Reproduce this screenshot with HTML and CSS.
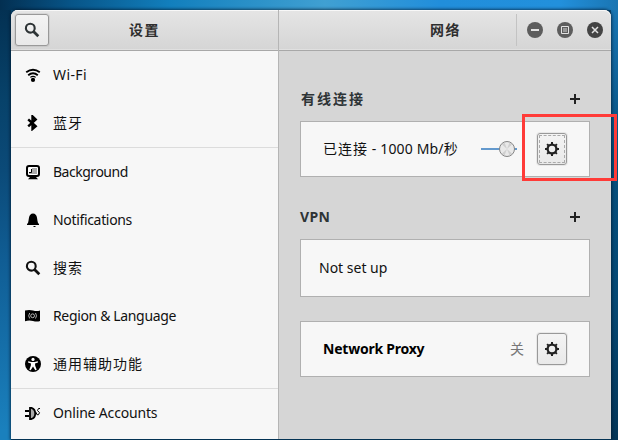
FILE: index.html
```html
<!DOCTYPE html>
<html lang="zh-CN">
<head>
<meta charset="utf-8">
<title>设置</title>
<link rel="stylesheet" href="styles.css">
</head>
<body>
<svg class="defs" width="0" height="0">
  <symbol id="search" viewBox="0 0 16 16"><circle cx="6.3" cy="6.2" r="4.4" fill="none" stroke="currentColor" stroke-width="2.1"/><path d="M9.5 9.5l4.8 4.7" stroke="currentColor" stroke-width="2.8"/></symbol>
  <symbol id="gear" viewBox="0 0 16 16"><circle cx="8" cy="8" r="4.4" fill="none" stroke="currentColor" stroke-width="2.3"/><path d="M8 1v3M8 12v3M1 8h3M12 8h3M3.100 3.100l2 2M10.900 10.900l2 2M3.100 12.900l2-2M10.900 5.100l2-2" stroke="currentColor" stroke-width="2"/></symbol>
  <symbol id="plus" viewBox="0 0 10 10"><path d="M5 0v10M0 5h10" stroke="currentColor" stroke-width="2"/></symbol>
</svg>
<div class="window">
  <aside class="sidebar">
    <header class="bar">
      <button class="btn search-btn"><svg class="icon"><use href="#search"/></svg></button>
      <h1 class="title title-left">设置</h1>
    </header>
    <nav class="list">
      <a class="row"><svg class="icon" viewBox="0 0 16 16"><g fill="none" stroke="#000" stroke-width="1.900"><path d="M1.200 5.300Q8 .2 14.800 5.300"/><path d="M3.200 8.200Q8 4.300 12.800 8.200"/><path d="M5.300 10.400Q8 8.200 10.700 10.400" stroke-width="1.200"/></g><circle cx="8" cy="12.900" r="2.100"/></svg><span class="wifi">Wi-Fi</span></a>
      <a class="row line"><svg class="icon" viewBox="0 0 16 16"><path d="M3.200 4.300l7.500 7L7.500 14V1.400l3.200 3-7.500 7" fill="none" stroke="#000" stroke-width="2.400"/></svg><span class="cjk">蓝牙</span></a>
      <a class="row"><svg class="icon" viewBox="0 0 16 16"><rect x="2" y="1.900" width="12" height="10" rx="2" fill="#fff" stroke="#000" stroke-width="2"/><path d="M7 4h5v6H4V8h3z" fill="#aaa"/><path d="M4 8.500h2.500V5" fill="none" stroke="#000"/><path d="M5 13h6l2 2.200H3z"/></svg><span class="background">Background</span></a>
      <a class="row"><svg class="icon" viewBox="0 0 16 16"><path d="M2 13v-1l1-1C4 8 3.500 5 5 3Q8 .2 11 3c1.500 2 1 5 2 8l1 1v1zM8 14h3l-1 1H9z"/></svg><span class="notifications">Notifications</span></a>
      <a class="row"><svg class="icon"><use href="#search"/></svg><span class="cjk">搜索</span></a>
      <a class="row"><svg class="icon" viewBox="0 0 16 16"><path d="M0 2.600Q4 1.400 8 2.500t7 0V13q-3 1.200-7 0t-8 .3z"/><g fill="none" stroke="#ddd" stroke-width=".8"><circle cx="7.600" cy="7.800" r="1.900"/><path d="M4.700 5Q2.700 7.800 4.700 10.500M10.500 5q2 2.800 0 5.500"/></g></svg><span class="region">Region &amp; Language</span></a>
      <a class="row line"><svg class="icon" viewBox="0 0 16 16"><circle cx="8" cy="8" r="8"/><circle cx="8" cy="3.400" r="1.600" fill="#fff"/><path d="M3.200 5.200l3.300.7h3l3.300-.7.2 1.200-3 1 .2 2.300 1.500 4-1.400.5L8 10.500l-2.300 3.700-1.400-.5 1.500-4L6 7.400l-3-1z" fill="#fff"/></svg><span class="cjk">通用辅助功能</span></a>
      <a class="row"><svg class="icon" viewBox="0 0 16 16"><path d="M5 2.800h1.500Q10.200 4 10.200 8.500T6.500 14H5z" fill="#aaa" stroke="#000" stroke-width="1.800"/><path d="M0 6h4M0 11h4M10 8.500h2" stroke="#000" stroke-width="2"/><path d="M15 3.500h-1.500l-1 2 2 2.200-1 2H12" fill="none" stroke="#000"/></svg><span class="accounts">Online Accounts</span></a>
    </nav>
  </aside>
  <main class="panel">
    <header class="bar">
      <h1 class="title title-right">网络</h1>
      <div class="controls">
        <svg viewBox="0 0 16 16"><circle cx="8" cy="8" r="8" fill="#5d5d5d"/><path d="M4 8h8" stroke="#e3e3e3" stroke-width="2"/></svg>
        <svg viewBox="0 0 16 16"><circle cx="8" cy="8" r="8" fill="#5d5d5d"/><path d="M4.500 4.500h7v7h-7z" fill="#5d5d5d" stroke="#e3e3e3"/><path d="M6 6h4v4H6z" fill="#999"/></svg>
        <svg viewBox="0 0 16 16"><circle cx="8" cy="8" r="8" fill="#444"/><path d="M5 5l6 6M11 5l-6 6" stroke="#e3e3e3" stroke-width="1.500"/></svg>
      </div>
    </header>
    <div class="content">
      <div class="section"><h2 class="cjk-head">有线连接</h2><svg class="plus"><use href="#plus"/></svg></div>
      <div class="card">
        <span class="wired"><span class="cjk">已连接</span> - 1000 Mb/秒</span>
        <span class="slider"><svg width="36" height="18" viewBox="0 0 36 18"><path d="M0 9h36" stroke="#6399cd" stroke-width="2"/><circle cx="26" cy="9" r="7.500" fill="#e9e9e9" stroke="#858585"/><path d="M26 9l-5-4.500 2.500-2zM26 9l5-4.500-2.500-2zM26 9l-5 4.500 2.500 2zM26 9l5 4.500-2.500 2z" fill="#cfcfcf"/></svg></span>
        <button class="btn gear-btn focused"><svg class="icon"><use href="#gear"/></svg></button>
        <div class="highlight"></div>
      </div>
      <div class="section vpn-head"><h2 class="vpn-title">VPN</h2><svg class="plus"><use href="#plus"/></svg></div>
      <div class="card vpn"><span class="not-set">Not set up</span></div>
      <div class="card proxy"><b class="proxy-name">Network Proxy</b><span class="state">关</span><button class="btn gear-btn"><svg class="icon"><use href="#gear"/></svg></button></div>
    </div>
  </main>
</div>
</body>
</html>
```

FILE: styles.css
```css
* { box-sizing: border-box; }
body {
  margin: 0;
  width: 618px;
  height: 440px;
  padding: 10px 7px 1px 11px;
  overflow: hidden;
  font: 14px/20px "Noto Sans", "Noto Sans CJK SC", sans-serif;
  color: #111;
  background:
    linear-gradient(90deg, #032f51 0, #075487 70px, #127fbd 170px, #40a0d2 325px, #218edb 440px, #2290dc 560px, #1a75b2 618px) top / 100% 10px no-repeat,
    linear-gradient(#032f50 0, #07426a 100px, #0b4a78 170px, #105d94 260px, #1a80bd 430px) left / 11px 100% no-repeat,
    linear-gradient(#1a78b5, #11659c 70px, #06507d 150px, #054873 300px, #033557 440px) right / 7px 100% no-repeat,
    #084a75;
}
.defs { position: absolute; }
.window {
  display: flex;
  width: 600px;
  height: 429px;
  border-radius: 7px 7px 0 0;
  background: #d6d6d6;
  box-shadow: 0 0 3px 1px rgba(0, 20, 40, .65);
}
.sidebar { flex: none; width: 268px; overflow: hidden; border-right: 1px solid #b5b5b5; border-top-left-radius: 7px; background: #f7f7f7; }
.panel { flex: 1; min-width: 0; }
.panel .bar { border-top-right-radius: 7px; }
.bar {
  display: flex;
  align-items: center;
  height: 41px;
  border-bottom: 1px solid #a8a8a8;
  background: linear-gradient(#e5e5e5, #d5d5d5);
  box-shadow: inset 0 1px #f8f8f8, inset 0 -1px #e0e0e0;
}
.btn {
  display: grid;
  place-items: center;
  padding: 0;
  border: 1px solid #999;
  border-radius: 3px;
  color: #2e3436;
  background: linear-gradient(#f4f4f4, #e9e9e9);
  box-shadow: 0 0 0 1px rgba(0, 0, 0, .06);
}
.icon { display: block; flex: none; width: 16px; height: 16px; }
.search-btn { width: 34px; height: 32px; margin-left: 4px; }
.title { margin: 0; font-size: 14px; font-weight: 700; letter-spacing: 1.5px; color: #2e2e2e; }
.title-left { margin-left: 80px; }
.title-right { width: 237px; padding-left: 151px; }
.controls { display: flex; gap: 14px; height: 32px; align-items: center; padding-left: 10px; border-left: 1px solid #c3c3c3; }
.controls svg { width: 16px; height: 16px; }
.row { display: flex; align-items: center; gap: 12px; height: 48px; padding-left: 14px; }
.row.line { height: 49px; border-bottom: 1px solid #dcdcdc; }
.cjk { letter-spacing: 1px; }
.wifi { letter-spacing: .4px; }
.background { letter-spacing: -.48px; }
.notifications { letter-spacing: -.33px; }
.region { letter-spacing: -.35px; }
.accounts { letter-spacing: -.17px; }
.wired { letter-spacing: .15px; }
.content { padding: 38px 21px 0; }
.section { display: flex; align-items: center; justify-content: space-between; height: 20px; margin-bottom: 12px; padding-right: 10px; }
.section h2 { margin: 0; font-size: 14px; color: #2e3436; }
.section .cjk-head { padding-left: 1px; letter-spacing: 2px; }
.section .vpn-title { letter-spacing: .3px; }
.plus { width: 10px; height: 10px; color: #222; }
.card {
  position: relative;
  display: flex;
  align-items: center;
  width: 290px;
  height: 56px;
  padding: 0 22px;
  border: 1px solid #b0b0b0;
  background: #f7f7f7;
}
.slider { display: flex; width: 36px; margin-left: auto; }
.gear-btn { width: 30px; height: 32px; margin-left: 20px; color: #222; }
.focused { outline: 1px dashed #aaa; outline-offset: -3px; }
.highlight { position: absolute; left: 221px; top: -8px; width: 95px; height: 67px; border: 3px solid #ff3b38; }
.vpn-head { margin-top: 30px; }
.vpn { height: 58px; padding-left: 18px; }
.proxy { margin-top: 24px; }
.proxy-name { letter-spacing: -.23px; color: #000; }
.state { margin-left: auto; color: #777; }
.proxy .gear-btn { margin-left: 13px; }
```
